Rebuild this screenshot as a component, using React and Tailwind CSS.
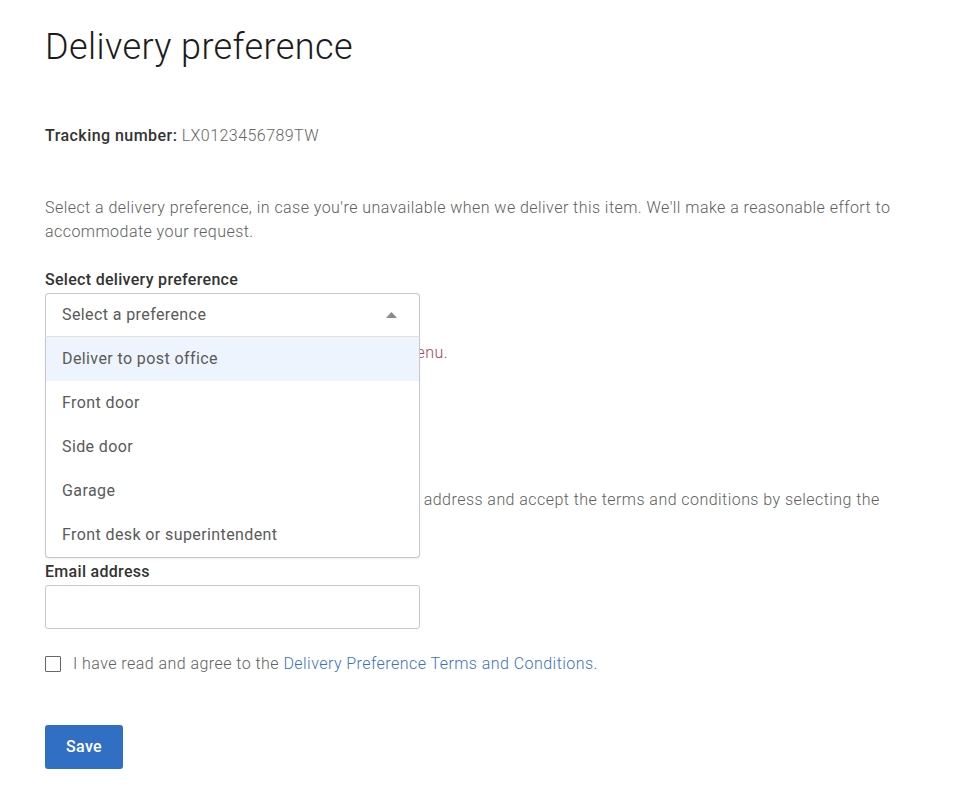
import React, { useState } from 'react';

const options = [
  'Deliver to post office',
  'Front door',
  'Side door',
  'Garage',
  'Front desk or superintendent',
];

const PreferenceSelect = () => {
  const [open, setOpen] = useState(true);
  const [value, setValue] = useState('');
  const [hover, setHover] = useState(0);

  return (
    <div className="relative w-[375px]">
      <button
        type="button"
        onClick={() => setOpen(!open)}
        className={`flex h-[44px] w-full items-center justify-between border border-[#c8c8c8] bg-white pl-4 pr-[22px] text-left text-[16px] tracking-[0.4px] text-[#5a5a5a] ${
          open ? 'rounded-t-[4px] border-b-[#e2e2e2]' : 'rounded-[4px]'
        }`}
      >
        <span>{value || 'Select a preference'}</span>
        <svg width="11" height="6" viewBox="0 0 11 6" className={open ? '' : 'rotate-180'}>
          <path d="M0 6 L5.5 0 L11 6 Z" fill="#8a8a8a" />
        </svg>
      </button>
      {open && (
        <ul className="absolute left-0 right-0 top-full z-10 rounded-b-[4px] border border-t-0 border-[#c8c8c8] bg-white shadow-[0_1px_2px_rgba(0,0,0,0.08)]">
          {options.map((o, i) => (
            <li
              key={o}
              onMouseEnter={() => setHover(i)}
              onClick={() => {
                setValue(o);
                setOpen(false);
              }}
              className={`flex h-[44px] cursor-pointer items-center pl-4 text-[16px] tracking-[0.4px] text-[#5a5a5a] ${
                hover === i ? 'bg-[#edf4fd]' : ''
              }`}
            >
              {o}
            </li>
          ))}
        </ul>
      )}
    </div>
  );
};

const App = () => {
  const [agree, setAgree] = useState(false);
  const [email, setEmail] = useState('');

  return (
    <div className="min-h-screen bg-white pl-[45px] pr-8 pt-[25px] font-['Roboto','Liberation_Sans',sans-serif] text-[#606060]">
      <h1 className="text-[36px] font-light leading-[44px] tracking-[0.4px] text-[#1b1b1b]">Delivery preference</h1>

      <p className="mt-[55px] text-[16px] leading-6 tracking-[0.45px]">
        <span className="font-medium text-[#333]">Tracking number: </span>
        <span className="font-light text-[#666]">LX0123456789TW</span>
      </p>

      <p className="mt-[48px] max-w-[870px] text-[16px] font-light leading-6 tracking-[0.45px]">
        Select a delivery preference, in case you're unavailable when we deliver this item. We'll make a reasonable effort to accommodate your request.
      </p>

      <label className="mt-6 block text-[16px] font-medium leading-6 tracking-[0.3px] text-[#333]">
        Select delivery preference
      </label>
      <div className="mt-[1px]">
        <PreferenceSelect />
      </div>
      <p className="mt-1 text-[16px] font-light leading-6 tracking-[0.45px] text-[#a3455a]">
        Please select a delivery preference from the top menu.
      </p>

      <h2 className="mt-[55px] text-[20px] font-light leading-7 text-[#333]">Email notification</h2>

      <p className="mt-[40px] max-w-[870px] text-[16px] font-light leading-6 tracking-[0.45px]">
        To receive an email notification, include your email address and accept the terms and conditions by selecting the checkbox below.
      </p>

      <label className="mt-6 block text-[16px] font-medium leading-6 tracking-[0.3px] text-[#333]">Email address</label>
      <input
        type="email"
        value={email}
        onChange={(e) => setEmail(e.target.value)}
        className="mt-[1px] block h-[44px] w-[375px] rounded-[3px] border border-[#c8c8c8] px-4 text-[16px] outline-none focus:border-[#316fc4]"
      />

      <label className="mt-[23px] flex cursor-pointer items-center gap-[12px] text-[16px] font-light leading-6 tracking-[0.45px]">
        <input
          type="checkbox"
          checked={agree}
          onChange={(e) => setAgree(e.target.checked)}
          className="h-[16px] w-[16px] appearance-none rounded-[1px] border-[1.5px] border-[#666] bg-white checked:bg-[#316fc4]"
        />
        <span>
          I have read and agree to the{' '}
          <a href="#" className="text-[#3a72c2]">
            Delivery Preference Terms and Conditions.
          </a>
        </span>
      </label>

      <button
        type="button"
        className="mt-[49px] h-[44px] w-[78px] rounded-[3px] bg-[#316fc4] text-[16px] font-medium tracking-[0.3px] text-white"
      >
        Save
      </button>
    </div>
  );
};

export default App;
